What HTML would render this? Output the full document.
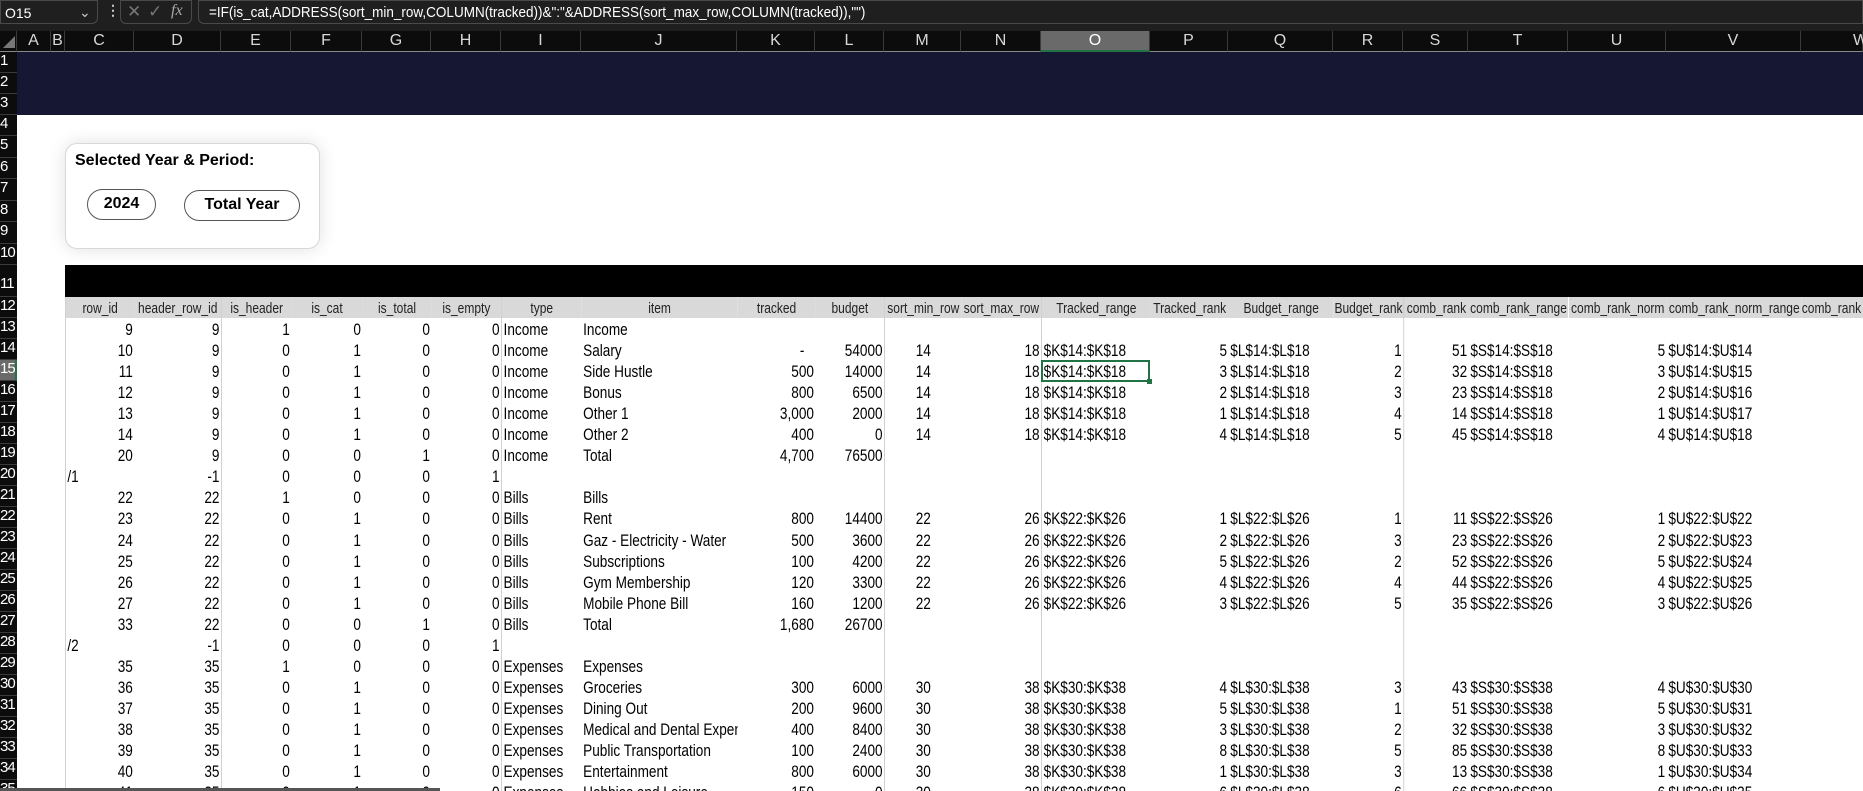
<!DOCTYPE html>
<html><head><meta charset="utf-8">
<style>
*{margin:0;padding:0;box-sizing:border-box}
html{width:1863px;height:791px;overflow:hidden}
body{width:1863px;height:791px;overflow:hidden;background:#fff;position:relative;font-family:"Liberation Sans",sans-serif}
.fb{position:absolute;left:0;top:0;width:1863px;height:31px;background:#1f1f1f}
.nb{position:absolute;left:0;top:0;width:98px;height:24px;border:1px solid #4a4a4a;border-radius:0 0 6px 0;color:#fff;font:14px "Liberation Sans",sans-serif;padding:4px 4px}
.ib{position:absolute;left:120px;top:0;width:72px;height:24px;border:1px solid #4a4a4a;border-radius:0 0 6px 6px;color:#777;font:16px "Liberation Serif",serif}
.fx{position:absolute;left:198px;top:0;width:1665px;height:24px;border:1px solid #4a4a4a;border-radius:0 0 0 6px;color:#fff;font:15px "Liberation Sans",sans-serif;padding:3px 10px;white-space:nowrap}
.fx span{display:inline-block;transform:scaleX(0.9);transform-origin:left}
.ch{position:absolute;top:31px;height:21px;background:#0c0c0c;color:#d8d8d8;font-size:16px;text-align:center;line-height:20px;border-right:1px solid #3a3a3a;border-bottom:1px solid #888}
.rn{position:absolute;left:0;width:17px;background:#0c0c0c;color:#fff;font-size:15px;overflow:hidden;white-space:nowrap;border-bottom:1px solid #3a3a3a;letter-spacing:-1px}
.navy{position:absolute;left:17px;top:52px;width:1846px;height:63px;background:#151733}
.card{position:absolute;left:65px;top:143px;width:255px;height:106px;border:1px solid #d8d8d8;border-radius:12px;box-shadow:0 0 18px rgba(0,0,0,.12);background:#fff}
.card .t{position:absolute;left:9px;top:8px;font:bold 16px "Liberation Sans",sans-serif;white-space:nowrap}
.pill{position:absolute;border:1px solid #555;border-radius:16px;font:bold 16px "Liberation Sans",sans-serif;text-align:center;line-height:28px}
.blk{position:absolute;left:65px;top:265px;width:1798px;height:32px;background:#000}
.wrap{position:absolute;left:0;top:0;width:1863px;height:791px;overflow:hidden}
table{position:absolute;left:65px;top:297px;border-collapse:collapse;table-layout:fixed;width:2247.5px;font-size:17px;transform:scaleX(0.8);transform-origin:0 0}
tr{height:21.05px}
td{height:21.05px;line-height:18px;padding:3px 2px 0;white-space:nowrap;overflow:hidden;text-align:right;color:#000}
tr.h td{background:#d9d9d9;text-align:center;font-size:15px;color:#222;padding:2px 0 0}
td:nth-child(1),td:nth-child(3),td:nth-child(7),td:nth-child(11),td:nth-child(13),td:nth-child(17){border-left:1px solid #c6c6c6}
td:nth-child(7),td:nth-child(8),td:nth-child(13),td:nth-child(15),td:nth-child(18),td:nth-child(20){text-align:left}
td.l{text-align:left}
.sel{position:absolute;left:1041px;top:360px;width:109px;height:22px;border:2px solid #217346}
.sel:after{content:"";position:absolute;right:-4px;bottom:-4px;width:5px;height:5px;background:#217346}
.bot{position:absolute;left:0;top:788px;width:440px;height:3px;background:#555}
</style></head><body><div class="wrap">
<div class="fb">
<div class="nb">O15<span style="position:absolute;left:78px;top:3px;color:#ccc">&#8964;</span></div>
<div style="position:absolute;left:106px;top:2px;color:#ccc;font:bold 14px sans-serif">&#8942;</div>
<div class="ib"><span style="position:absolute;left:6px;top:1px;font:17px sans-serif">&#10005;</span><span style="position:absolute;left:27px;top:1px;font:17px sans-serif">&#10003;</span><span style="position:absolute;left:50px;top:1px;font-style:italic;color:#aaa">fx</span></div>
<div class="fx"><span>=IF(is_cat,ADDRESS(sort_min_row,COLUMN(tracked))&amp;":"&amp;ADDRESS(sort_max_row,COLUMN(tracked)),"")</span></div>
</div>
<div class="ch" style="left:0;width:17px;background:#0c0c0c"><span style="position:absolute;left:3px;top:5px;width:0;height:0;border-left:12px solid transparent;border-bottom:12px solid #777"></span></div>
<div class="ch" style="left:17px;width:34px">A</div>
<div class="ch" style="left:51px;width:14px">B</div>
<div class="ch" style="left:65px;width:69px">C</div>
<div class="ch" style="left:134px;width:87px">D</div>
<div class="ch" style="left:221px;width:70px">E</div>
<div class="ch" style="left:291px;width:71px">F</div>
<div class="ch" style="left:362px;width:69px">G</div>
<div class="ch" style="left:431px;width:70px">H</div>
<div class="ch" style="left:501px;width:80px">I</div>
<div class="ch" style="left:581px;width:156px">J</div>
<div class="ch" style="left:737px;width:78px">K</div>
<div class="ch" style="left:815px;width:69px">L</div>
<div class="ch" style="left:884px;width:77px">M</div>
<div class="ch" style="left:961px;width:80px">N</div>
<div class="ch" style="left:1041px;width:109px;background:#6a6a6a;color:#fff;border-bottom:2px solid #217346">O</div>
<div class="ch" style="left:1150px;width:78px">P</div>
<div class="ch" style="left:1228px;width:105px">Q</div>
<div class="ch" style="left:1333px;width:70px">R</div>
<div class="ch" style="left:1403px;width:65px">S</div>
<div class="ch" style="left:1468px;width:100px">T</div>
<div class="ch" style="left:1568px;width:98px">U</div>
<div class="ch" style="left:1666px;width:135px">V</div>
<div class="ch" style="left:1801px;width:62px;text-align:left;padding-left:52px">W</div>

<div class="rn" style="top:52px;height:21px">1</div>
<div class="rn" style="top:73px;height:21px">2</div>
<div class="rn" style="top:94px;height:21px">3</div>
<div class="rn" style="top:115px;height:21px">4</div>
<div class="rn" style="top:136px;height:22px">5</div>
<div class="rn" style="top:158px;height:21px">6</div>
<div class="rn" style="top:179px;height:22px">7</div>
<div class="rn" style="top:201px;height:21px">8</div>
<div class="rn" style="top:222px;height:22px">9</div>
<div class="rn" style="top:244px;height:21px">10</div>
<div class="rn" style="top:265px;height:32px;padding-top:10px">11</div>
<div class="rn" style="top:297px;height:21px">12</div>
<div class="rn" style="top:318px;height:21px">13</div>
<div class="rn" style="top:339px;height:21px">14</div>
<div class="rn" style="top:360px;height:21px;background:#6a6a6a;border-right:2px solid #217346">15</div>
<div class="rn" style="top:381px;height:21px">16</div>
<div class="rn" style="top:402px;height:21px">17</div>
<div class="rn" style="top:423px;height:21px">18</div>
<div class="rn" style="top:444px;height:21px">19</div>
<div class="rn" style="top:465px;height:21px">20</div>
<div class="rn" style="top:486px;height:21px">21</div>
<div class="rn" style="top:507px;height:21px">22</div>
<div class="rn" style="top:528px;height:21px">23</div>
<div class="rn" style="top:549px;height:21px">24</div>
<div class="rn" style="top:570px;height:21px">25</div>
<div class="rn" style="top:591px;height:21px">26</div>
<div class="rn" style="top:612px;height:21px">27</div>
<div class="rn" style="top:633px;height:21px">28</div>
<div class="rn" style="top:654px;height:21px">29</div>
<div class="rn" style="top:675px;height:21px">30</div>
<div class="rn" style="top:696px;height:21px">31</div>
<div class="rn" style="top:717px;height:21px">32</div>
<div class="rn" style="top:738px;height:21px">33</div>
<div class="rn" style="top:759px;height:21px">34</div>
<div class="rn" style="top:780px;height:21px">35</div>

<div class="navy"></div>
<div class="card"><div class="t">Selected Year &amp; Period:</div>
<div class="pill" style="left:21px;top:45px;width:69px;height:31px">2024</div>
<div class="pill" style="left:118px;top:46px;width:116px;height:31px">Total Year</div>
</div>
<div class="blk"></div>

<table>
<colgroup><col style="width:86.3px"><col style="width:108.8px"><col style="width:87.5px"><col style="width:88.8px"><col style="width:86.3px"><col style="width:87.5px"><col style="width:100px"><col style="width:195px"><col style="width:97.5px"><col style="width:86.3px"><col style="width:96.3px"><col style="width:100px"><col style="width:136.3px"><col style="width:97.5px"><col style="width:131.3px"><col style="width:87.5px"><col style="width:81.3px"><col style="width:125px"><col style="width:122.5px"><col style="width:168.8px"><col style="width:77.5px"></colgroup>
<tr class="h"><td>row_id</td><td>header_row_id</td><td>is_header</td><td>is_cat</td><td>is_total</td><td>is_empty</td><td>type</td><td>item</td><td>tracked</td><td>budget</td><td>sort_min_row</td><td>sort_max_row</td><td>Tracked_range</td><td>Tracked_rank</td><td>Budget_range</td><td>Budget_rank</td><td>comb_rank</td><td>comb_rank_range</td><td>comb_rank_norm</td><td>comb_rank_norm_range</td><td style="text-align:left;padding:2px 0 0">comb_rank</td></tr>
<tr><td>9</td><td>9</td><td>1</td><td>0</td><td>0</td><td>0</td><td>Income</td><td>Income</td><td></td><td></td><td></td><td></td><td></td><td></td><td></td><td></td><td></td><td></td><td></td><td></td><td></td></tr>
<tr><td>10</td><td>9</td><td>0</td><td>1</td><td>0</td><td>0</td><td>Income</td><td>Salary</td><td style="padding-right:14px">-</td><td>54000</td><td style="text-align:center">14</td><td>18</td><td>$K$14:$K$18</td><td>5</td><td>$L$14:$L$18</td><td>1</td><td>51</td><td>$S$14:$S$18</td><td>5</td><td>$U$14:$U$14</td><td></td></tr>
<tr><td>11</td><td>9</td><td>0</td><td>1</td><td>0</td><td>0</td><td>Income</td><td>Side Hustle</td><td>500</td><td>14000</td><td style="text-align:center">14</td><td>18</td><td>$K$14:$K$18</td><td>3</td><td>$L$14:$L$18</td><td>2</td><td>32</td><td>$S$14:$S$18</td><td>3</td><td>$U$14:$U$15</td><td></td></tr>
<tr><td>12</td><td>9</td><td>0</td><td>1</td><td>0</td><td>0</td><td>Income</td><td>Bonus</td><td>800</td><td>6500</td><td style="text-align:center">14</td><td>18</td><td>$K$14:$K$18</td><td>2</td><td>$L$14:$L$18</td><td>3</td><td>23</td><td>$S$14:$S$18</td><td>2</td><td>$U$14:$U$16</td><td></td></tr>
<tr><td>13</td><td>9</td><td>0</td><td>1</td><td>0</td><td>0</td><td>Income</td><td>Other 1</td><td>3,000</td><td>2000</td><td style="text-align:center">14</td><td>18</td><td>$K$14:$K$18</td><td>1</td><td>$L$14:$L$18</td><td>4</td><td>14</td><td>$S$14:$S$18</td><td>1</td><td>$U$14:$U$17</td><td></td></tr>
<tr><td>14</td><td>9</td><td>0</td><td>1</td><td>0</td><td>0</td><td>Income</td><td>Other 2</td><td>400</td><td>0</td><td style="text-align:center">14</td><td>18</td><td>$K$14:$K$18</td><td>4</td><td>$L$14:$L$18</td><td>5</td><td>45</td><td>$S$14:$S$18</td><td>4</td><td>$U$14:$U$18</td><td></td></tr>
<tr><td>20</td><td>9</td><td>0</td><td>0</td><td>1</td><td>0</td><td>Income</td><td>Total</td><td>4,700</td><td>76500</td><td></td><td></td><td></td><td></td><td></td><td></td><td></td><td></td><td></td><td></td><td></td></tr>
<tr><td class="l">/1</td><td>-1</td><td>0</td><td>0</td><td>0</td><td>1</td><td></td><td></td><td></td><td></td><td></td><td></td><td></td><td></td><td></td><td></td><td></td><td></td><td></td><td></td><td></td></tr>
<tr><td>22</td><td>22</td><td>1</td><td>0</td><td>0</td><td>0</td><td>Bills</td><td>Bills</td><td></td><td></td><td></td><td></td><td></td><td></td><td></td><td></td><td></td><td></td><td></td><td></td><td></td></tr>
<tr><td>23</td><td>22</td><td>0</td><td>1</td><td>0</td><td>0</td><td>Bills</td><td>Rent</td><td>800</td><td>14400</td><td style="text-align:center">22</td><td>26</td><td>$K$22:$K$26</td><td>1</td><td>$L$22:$L$26</td><td>1</td><td>11</td><td>$S$22:$S$26</td><td>1</td><td>$U$22:$U$22</td><td></td></tr>
<tr><td>24</td><td>22</td><td>0</td><td>1</td><td>0</td><td>0</td><td>Bills</td><td>Gaz - Electricity - Water</td><td>500</td><td>3600</td><td style="text-align:center">22</td><td>26</td><td>$K$22:$K$26</td><td>2</td><td>$L$22:$L$26</td><td>3</td><td>23</td><td>$S$22:$S$26</td><td>2</td><td>$U$22:$U$23</td><td></td></tr>
<tr><td>25</td><td>22</td><td>0</td><td>1</td><td>0</td><td>0</td><td>Bills</td><td>Subscriptions</td><td>100</td><td>4200</td><td style="text-align:center">22</td><td>26</td><td>$K$22:$K$26</td><td>5</td><td>$L$22:$L$26</td><td>2</td><td>52</td><td>$S$22:$S$26</td><td>5</td><td>$U$22:$U$24</td><td></td></tr>
<tr><td>26</td><td>22</td><td>0</td><td>1</td><td>0</td><td>0</td><td>Bills</td><td>Gym Membership</td><td>120</td><td>3300</td><td style="text-align:center">22</td><td>26</td><td>$K$22:$K$26</td><td>4</td><td>$L$22:$L$26</td><td>4</td><td>44</td><td>$S$22:$S$26</td><td>4</td><td>$U$22:$U$25</td><td></td></tr>
<tr><td>27</td><td>22</td><td>0</td><td>1</td><td>0</td><td>0</td><td>Bills</td><td>Mobile Phone Bill</td><td>160</td><td>1200</td><td style="text-align:center">22</td><td>26</td><td>$K$22:$K$26</td><td>3</td><td>$L$22:$L$26</td><td>5</td><td>35</td><td>$S$22:$S$26</td><td>3</td><td>$U$22:$U$26</td><td></td></tr>
<tr><td>33</td><td>22</td><td>0</td><td>0</td><td>1</td><td>0</td><td>Bills</td><td>Total</td><td>1,680</td><td>26700</td><td></td><td></td><td></td><td></td><td></td><td></td><td></td><td></td><td></td><td></td><td></td></tr>
<tr><td class="l">/2</td><td>-1</td><td>0</td><td>0</td><td>0</td><td>1</td><td></td><td></td><td></td><td></td><td></td><td></td><td></td><td></td><td></td><td></td><td></td><td></td><td></td><td></td><td></td></tr>
<tr><td>35</td><td>35</td><td>1</td><td>0</td><td>0</td><td>0</td><td>Expenses</td><td>Expenses</td><td></td><td></td><td></td><td></td><td></td><td></td><td></td><td></td><td></td><td></td><td></td><td></td><td></td></tr>
<tr><td>36</td><td>35</td><td>0</td><td>1</td><td>0</td><td>0</td><td>Expenses</td><td>Groceries</td><td>300</td><td>6000</td><td style="text-align:center">30</td><td>38</td><td>$K$30:$K$38</td><td>4</td><td>$L$30:$L$38</td><td>3</td><td>43</td><td>$S$30:$S$38</td><td>4</td><td>$U$30:$U$30</td><td></td></tr>
<tr><td>37</td><td>35</td><td>0</td><td>1</td><td>0</td><td>0</td><td>Expenses</td><td>Dining Out</td><td>200</td><td>9600</td><td style="text-align:center">30</td><td>38</td><td>$K$30:$K$38</td><td>5</td><td>$L$30:$L$38</td><td>1</td><td>51</td><td>$S$30:$S$38</td><td>5</td><td>$U$30:$U$31</td><td></td></tr>
<tr><td>38</td><td>35</td><td>0</td><td>1</td><td>0</td><td>0</td><td>Expenses</td><td>Medical and Dental Expenses</td><td>400</td><td>8400</td><td style="text-align:center">30</td><td>38</td><td>$K$30:$K$38</td><td>3</td><td>$L$30:$L$38</td><td>2</td><td>32</td><td>$S$30:$S$38</td><td>3</td><td>$U$30:$U$32</td><td></td></tr>
<tr><td>39</td><td>35</td><td>0</td><td>1</td><td>0</td><td>0</td><td>Expenses</td><td>Public Transportation</td><td>100</td><td>2400</td><td style="text-align:center">30</td><td>38</td><td>$K$30:$K$38</td><td>8</td><td>$L$30:$L$38</td><td>5</td><td>85</td><td>$S$30:$S$38</td><td>8</td><td>$U$30:$U$33</td><td></td></tr>
<tr><td>40</td><td>35</td><td>0</td><td>1</td><td>0</td><td>0</td><td>Expenses</td><td>Entertainment</td><td>800</td><td>6000</td><td style="text-align:center">30</td><td>38</td><td>$K$30:$K$38</td><td>1</td><td>$L$30:$L$38</td><td>3</td><td>13</td><td>$S$30:$S$38</td><td>1</td><td>$U$30:$U$34</td><td></td></tr>
<tr><td>41</td><td>35</td><td>0</td><td>1</td><td>0</td><td>0</td><td>Expenses</td><td>Hobbies and Leisure</td><td>150</td><td>0</td><td style="text-align:center">30</td><td>38</td><td>$K$30:$K$38</td><td>6</td><td>$L$30:$L$38</td><td>6</td><td>66</td><td>$S$30:$S$38</td><td>6</td><td>$U$30:$U$35</td><td></td></tr>
</table>
<div class="sel"></div>
<div class="bot"></div>
</div></body></html>
